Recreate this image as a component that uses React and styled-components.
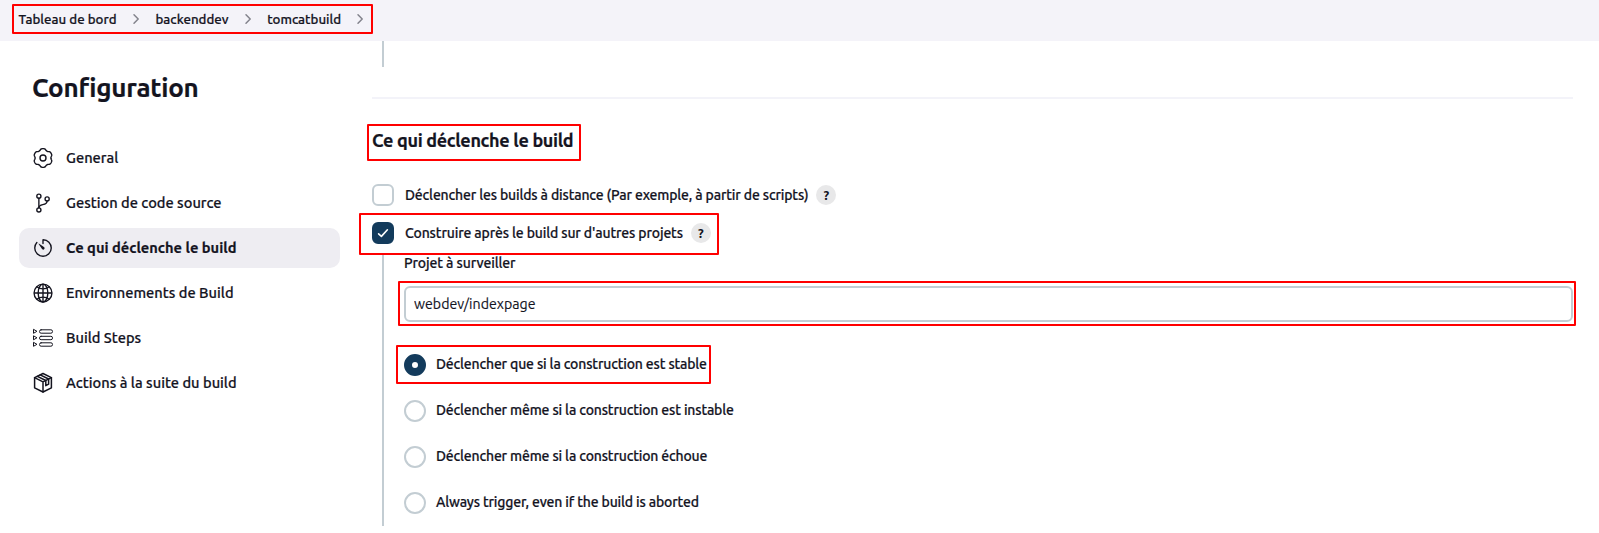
import React from 'react';
import styled, { createGlobalStyle } from 'styled-components';
import { IoGitBranchOutline, IoTimerOutline, IoGlobeOutline } from 'react-icons/io5';

const GlobalStyle = createGlobalStyle`
  * { box-sizing: border-box; }
  body {
    margin: 0;
    background: #fff;
    color: #14141f;
    font-family: Ubuntu, 'Noto Sans', 'Open Sans', sans-serif;
    overflow: hidden;
  }
`;

const Page = styled.div`
  display: flex;
  flex-direction: column;
  width: 1599px;
  height: 533px;
`;

const Header = styled.header`
  display: flex;
  flex: none;
  align-items: flex-start;
  height: 41px;
  padding: 4px 0 0 12px;
  background: #f4f3f9;
`;

const Breadcrumbs = styled.nav`
  display: flex;
  align-items: center;
  width: 361px;
  height: 30px;
  padding-left: 4.5px;
  border: 2px solid #f00;
  border-radius: 1px;
`;

const Crumb = styled.span`
  flex: none;
  width: ${(p) => p.$width}px;
  padding-top: 2px;
  font-size: 13.3px;
  font-weight: 500;
  line-height: 20px;
  white-space: nowrap;
  -webkit-text-stroke: 0.2px currentColor;
`;

const Separator = styled.svg`
  flex: none;
  width: 10px;
  height: 12px;
  margin: 0 14.5px;
  fill: none;
  stroke: #83838c;
  stroke-width: 1.5;
  stroke-linecap: round;
  stroke-linejoin: round;
`;

const Body = styled.div`
  display: flex;
  flex: 1;
`;

const Sidebar = styled.aside`
  width: 340px;
  padding: 31px 0 0 19px;
`;

const PageTitle = styled.h1`
  margin: 0 0 34px 13px;
  font-size: 26px;
  font-weight: 700;
  line-height: 32px;
  letter-spacing: -0.28px;
  -webkit-text-stroke: 0.2px currentColor;
`;

const NavList = styled.div`
  display: flex;
  flex-direction: column;
  gap: 5px;
`;

const NavItem = styled.a`
  display: flex;
  align-items: center;
  gap: 12px;
  height: 40px;
  padding-left: 13px;
  border-radius: 10px;
  background: ${(p) => (p.$active ? '#eeedf2' : 'transparent')};
  font-weight: ${(p) => (p.$active ? 700 : 500)};

  svg {
    flex: none;
    width: 22px;
    height: 22px;
  }
`;

const NavLabel = styled.span`
  font-size: 14.65px;
  line-height: 20px;
  white-space: nowrap;
  -webkit-text-stroke: 0.2px currentColor;
`;

const LineIcon = styled.svg`
  fill: none;
  stroke: currentColor;
  stroke-width: ${(p) => p.$stroke || 1.4};
  stroke-linecap: round;
  stroke-linejoin: round;
`;

const Main = styled.main`
  display: flex;
  flex-direction: column;
  align-items: flex-start;
  width: 1201px;
  margin-left: 32px;
`;

const PreviousSection = styled.div`
  height: 26px;
  margin-left: 10px;
  border-left: 2px solid #c3cdd3;
`;

const Divider = styled.hr`
  width: 100%;
  height: 2px;
  margin: 30px 0 29px;
  border: 0;
  background: #f3f3f9;
`;

const Callout = styled.div`
  position: relative;
  width: ${(p) => (p.$fill ? '100%' : 'fit-content')};

  &::after {
    content: '';
    position: absolute;
    inset: ${(p) => p.$inset};
    border: 2px solid #f00;
    border-radius: 1px;
    pointer-events: none;
  }
`;

const SectionTitle = styled.h2`
  width: 201px;
  margin: 0;
  font-size: 18px;
  font-weight: 700;
  line-height: 25px;
  letter-spacing: -0.33px;
  white-space: nowrap;
  -webkit-text-stroke: 0.2px currentColor;
`;

const Options = styled.div`
  display: flex;
  flex-direction: column;
  gap: 16px;
  margin-top: 31px;
`;

const OptionRow = styled.label`
  display: flex;
  align-items: center;
  height: 22px;
`;

const Checkbox = styled.span`
  display: grid;
  place-items: center;
  width: 22px;
  height: 22px;
  margin-right: 11px;
  border: 2px solid ${(p) => (p.$checked ? '#133b5c' : '#c3cdd3')};
  border-radius: 6px;
  background: ${(p) => (p.$checked ? '#133b5c' : '#fff')};
`;

const CheckMark = styled.svg`
  width: 12px;
  height: 12px;
  fill: none;
  stroke: #fff;
  stroke-width: 1.6;
  stroke-linecap: round;
  stroke-linejoin: round;
`;

const Label = styled.span`
  font-size: 14px;
  font-weight: 500;
  line-height: 20px;
  letter-spacing: ${(p) => p.$tracking}px;
  white-space: nowrap;
  -webkit-text-stroke: 0.2px currentColor;
`;

const Help = styled.span`
  display: grid;
  place-items: center;
  width: 20px;
  height: 20px;
  margin-left: 8px;
  border-radius: 50%;
  background: #e8e8e9;
  font-size: 13px;
  font-weight: 700;
  line-height: 20px;
`;

const Nested = styled.div`
  display: flex;
  flex-direction: column;
  align-items: flex-start;
  width: 1191px;
  height: 271px;
  margin: 11px 0 0 10px;
  padding-left: 20px;
  border-left: 2px solid #c3cdd3;
`;

const FieldLabel = styled(Label)`
  margin-bottom: 15px;
  line-height: 16px;
`;

const TextInput = styled.input`
  display: block;
  width: 100%;
  height: 36px;
  padding: 0 8px;
  border: 2px solid #c3cdd3;
  border-radius: 6px;
  background: #fff;
  color: inherit;
  font-family: inherit;
  font-size: 14.2px;
  outline: 0;
  -webkit-text-stroke: 0.15px currentColor;
`;

const RadioGroup = styled.div`
  display: flex;
  flex-direction: column;
  gap: 24px;
  margin-top: 32px;
`;

const RadioRow = styled.label`
  display: flex;
  align-items: center;
  gap: 10px;
  height: 22px;

  ${Label} {
    padding-bottom: 2px;
  }
`;

const Radio = styled.span`
  width: 22px;
  height: 22px;
  border: ${(p) => (p.$checked ? '8px solid #133b5c' : '2px solid #c3cdd3')};
  border-radius: 50%;
  background: #fff;
`;

const gearPath = (() => {
  const steps = 120;
  const points = Array.from({ length: steps }, (_, i) => {
    const angle = (i / steps) * Math.PI * 2;
    const lobe = Math.tanh(1.5 * (0.35 - Math.cos(6 * angle)));
    const radius = 8.55 + 0.85 * lobe;
    return `${(11 + radius * Math.cos(angle)).toFixed(2)} ${(11 + radius * Math.sin(angle)).toFixed(2)}`;
  });
  return `M${points.join('L')}Z`;
})();

const GearIcon = () => (
  <LineIcon viewBox="0 0 22 22">
    <path d={gearPath} />
    <circle cx="11" cy="11" r="3" />
  </LineIcon>
);

const StepsIcon = () => (
  <LineIcon viewBox="0 0 22 22" $stroke={1}>
    {[4.5, 11, 17.5].map((y) => (
      <React.Fragment key={y}>
        <path d={`M1.5 ${y - 1.8}v3.6L4.6 ${y}z`} />
        <rect x="7.5" y={y - 1.7} width="13" height="3.4" rx="1.6" />
      </React.Fragment>
    ))}
  </LineIcon>
);

const PackageIcon = () => (
  <LineIcon viewBox="0 0 22 22" $stroke={1.5}>
    <path d="M11 1.5 19.4 5.6v10.2L11 20 2.6 15.8V5.6z" />
    <path d="M2.6 5.7 11 9.8l8.4-4.1M11 9.8V20" />
    <path d="M5.4 4.3 13.8 8.5v5.2l2.8-1.5V7L8.2 2.9" />
  </LineIcon>
);

const Chevron = () => (
  <Separator viewBox="0 0 10 12">
    <path d="M3 1.8 7.2 6 3 10.2" />
  </Separator>
);

const crumbs = [
  { text: 'Tableau de bord', width: 98 },
  { text: 'backenddev', width: 72.7 },
  { text: 'tomcatbuild', width: 73 },
];

const navItems = [
  { text: 'General', icon: GearIcon },
  { text: 'Gestion de code source', icon: IoGitBranchOutline },
  { text: 'Ce qui déclenche le build', icon: IoTimerOutline, active: true },
  { text: 'Environnements de Build', icon: IoGlobeOutline },
  { text: 'Build Steps', icon: StepsIcon },
  { text: 'Actions à la suite du build', icon: PackageIcon },
];

const RadioOption = ({ text, checked }) => (
  <RadioRow>
    <Radio $checked={checked} />
    <Label $tracking={-0.16}>{text}</Label>
  </RadioRow>
);

export default function App() {
  return (
    <Page>
      <GlobalStyle />
      <Header>
        <Breadcrumbs>
          {crumbs.map((c) => (
            <React.Fragment key={c.text}>
              <Crumb $width={c.width}>{c.text}</Crumb>
              <Chevron />
            </React.Fragment>
          ))}
        </Breadcrumbs>
      </Header>
      <Body>
        <Sidebar>
          <PageTitle>Configuration</PageTitle>
          <NavList>
            {navItems.map(({ text, icon: Icon, active }) => (
              <NavItem key={text} $active={active}>
                <Icon />
                <NavLabel>{text}</NavLabel>
              </NavItem>
            ))}
          </NavList>
        </Sidebar>
        <Main>
          <PreviousSection />
          <Divider />
          <Callout $inset="-4px -8px -8px -5px">
            <SectionTitle>Ce qui déclenche le build</SectionTitle>
          </Callout>
          <Options>
            <OptionRow>
              <Checkbox />
              <Label $tracking={-0.15}>
                Déclencher les builds à distance (Par exemple, à partir de scripts)
              </Label>
              <Help>?</Help>
            </OptionRow>
            <Callout $inset="-9px -8px -11px -13px">
              <OptionRow>
                <Checkbox $checked>
                  <CheckMark viewBox="0 0 12 12">
                    <path d="M1.6 6.8 4.4 9.4 10.4 2.8" />
                  </CheckMark>
                </Checkbox>
                <Label $tracking={-0.14}>Construire après le build sur d'autres projets</Label>
                <Help>?</Help>
              </OptionRow>
            </Callout>
          </Options>
          <Nested>
            <FieldLabel $tracking={-0.1}>Projet à surveiller</FieldLabel>
            <Callout $fill $inset="-5px -3px -4px -6px">
              <TextInput defaultValue="webdev/indexpage" spellCheck={false} />
            </Callout>
            <RadioGroup>
              <Callout $inset="-9px -4px -8px -8px">
                <RadioOption checked text="Déclencher que si la construction est stable" />
              </Callout>
              <RadioOption text="Déclencher même si la construction est instable" />
              <RadioOption text="Déclencher même si la construction échoue" />
              <RadioOption text="Always trigger, even if the build is aborted" />
            </RadioGroup>
          </Nested>
        </Main>
      </Body>
    </Page>
  );
}
